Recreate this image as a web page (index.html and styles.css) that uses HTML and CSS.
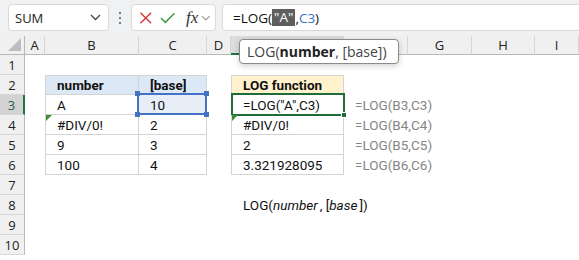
FILE: index.html
```html
<!DOCTYPE html>
<html lang="en">
<head>
    <meta charset="UTF-8">
    <title>LOG function</title>
    <link rel="stylesheet" href="styles.css">
</head>
<body>
    <div class="app">
        <div class="toolbar">
            <div class="namebox">
                <span>SUM</span>
                <svg class="chev" width="11" height="7" viewBox="0 0 11 7"><path d="M1 1l4.5 4.5L10 1" fill="none" stroke="#444" stroke-width="1.3"/></svg>
            </div>
            <div class="dots"><i></i><i></i><i></i></div>
            <div class="fxbox">
                <svg width="14" height="14" viewBox="0 0 14 14"><path d="M1.5 1.5l11 11M12.5 1.5l-11 11" stroke="#d63b3b" stroke-width="1.5" fill="none"/></svg>
                <svg width="16" height="12" viewBox="0 0 16 12"><path d="M1 6l4.5 4.5L15 1" stroke="#3f9a4a" stroke-width="1.5" fill="none"/></svg>
                <span class="fx">fx</span>
                <svg width="10" height="6" viewBox="0 0 10 6"><path d="M1 1l4 4 4-4" fill="none" stroke="#999" stroke-width="1.2"/></svg>
            </div>
            <div class="formula">=LOG(<span class="hl">"A"</span>,<span class="ref">C3</span>)</div>
        </div>

        <div class="sheet">
            <!-- E and F headers sit under the tooltip -->
            <div class="row colhead">
                <div class="corner"><svg width="13" height="13" viewBox="0 0 13 13"><path d="M13 0v13H0z" fill="#bdbdbd"/></svg></div>
                <div>A</div><div>B</div><div>C</div><div>D</div>
                <div class="sel"></div><div></div><div>G</div><div>H</div><div>I</div>
            </div>
            <div class="row">
                <div class="rh">1</div>
                <div></div><div></div><div></div><div></div><div></div><div></div><div></div><div></div><div></div>
            </div>
            <div class="row">
                <div class="rh">2</div>
                <div></div>
                <div class="t l top th blue">number</div>
                <div class="t top th blue">[base]</div>
                <div></div>
                <div class="t l top th yel">LOG function</div>
                <div></div><div></div><div></div><div></div>
            </div>
            <div class="row">
                <div class="rh cur">3</div>
                <div></div>
                <div class="t l">A</div>
                <div class="t refcell">10<i class="h tl"></i><i class="h tr"></i><i class="h bl"></i><i class="h br"></i></div>
                <div></div>
                <div class="t l active">=LOG("A",C3)<i class="fill"></i></div>
                <div class="note">=LOG(B3,C3)</div>
                <div></div><div></div><div></div>
            </div>
            <div class="row">
                <div class="rh">4</div>
                <div></div>
                <div class="t l err">#DIV/0!</div>
                <div class="t">2</div>
                <div></div>
                <div class="t l err">#DIV/0!</div>
                <div class="note">=LOG(B4,C4)</div>
                <div></div><div></div><div></div>
            </div>
            <div class="row">
                <div class="rh">5</div>
                <div></div>
                <div class="t l">9</div>
                <div class="t">3</div>
                <div></div>
                <div class="t l">2</div>
                <div class="note">=LOG(B5,C5)</div>
                <div></div><div></div><div></div>
            </div>
            <div class="row">
                <div class="rh">6</div>
                <div></div>
                <div class="t l">100</div>
                <div class="t">4</div>
                <div></div>
                <div class="t l">3.321928095</div>
                <div class="note">=LOG(B6,C6)</div>
                <div></div><div></div><div></div>
            </div>
            <div class="row">
                <div class="rh">7</div>
                <div></div><div></div><div></div><div></div><div></div><div></div><div></div><div></div><div></div>
            </div>
            <div class="row">
                <div class="rh">8</div>
                <div></div><div></div><div></div><div></div>
                <div class="syntax">LOG(<i>number</i>, [<i>base</i>])</div>
                <div></div><div></div><div></div><div></div>
            </div>
            <div class="row">
                <div class="rh">9</div>
                <div></div><div></div><div></div><div></div><div></div><div></div><div></div><div></div><div></div>
            </div>
            <div class="row">
                <div class="rh">10</div>
                <div></div><div></div><div></div><div></div><div></div><div></div><div></div><div></div><div></div>
            </div>
        </div>

        <div class="tip">LOG(<b>number</b>, [base])</div>
    </div>
</body>
</html>
```

FILE: styles.css
```css
* {
    margin: 0;
    padding: 0;
    box-sizing: border-box;
}

body {
    background: #fff;
    overflow: hidden;
    font-family: "Open Sans", "Noto Sans", sans-serif;
    color: #222;
}

.app {
    position: relative;
    width: 579px;
    height: 260px;
}

/* formula bar */
.toolbar {
    height: 36px;
    background: #eff1f2;
    display: flex;
    align-items: center;
    padding: 0 0 1px 8px;
}

.namebox {
    width: 101px;
    height: 27px;
    background: #fff;
    border: 1px solid #d9d9d9;
    border-radius: 4px;
    display: flex;
    align-items: center;
    justify-content: space-between;
    padding: 0 7px 0 6px;
    font-size: 13px;
}

.dots {
    width: 22px;
    display: flex;
    flex-direction: column;
    align-items: center;
    gap: 3px;
}

.dots i {
    width: 2px;
    height: 2px;
    background: #555;
    border-radius: 1px;
}

.fxbox {
    width: 85px;
    height: 27px;
    background: #fff;
    border: 1px solid #d9d9d9;
    border-radius: 4px;
    display: flex;
    align-items: center;
    padding: 0 4px 0 7px;
    gap: 7px;
}

.fx {
    font-family: "Liberation Serif", serif;
    font-style: italic;
    font-size: 17px;
    color: #333;
    margin-left: 4px;
    margin-right: -4px;
    line-height: 1;
}

.formula {
    flex: 1;
    height: 27px;
    margin-left: 6px;
    margin-right: -10px;
    background: #fff;
    border: 1px solid #d9d9d9;
    border-radius: 4px;
    display: flex;
    align-items: center;
    padding-left: 10px;
    font-size: 13.5px;
    color: #111;
    white-space: pre;
}

.formula .hl {
    background: #5e5e5e;
    color: #fff;
    padding: 0 2px;
    line-height: 17px;
}

.formula .ref {
    color: #3a72c9;
}

/* grid */
.sheet {
    font-family: Roboto, "Liberation Sans", sans-serif;
    font-size: 13.5px;
}

.row {
    display: grid;
    grid-template-columns: 25px 20px 94px 68px 24px 113px 64px 64px 63px 44px;
    height: 20px;
}

.row > div {
    display: flex;
    align-items: center;
    white-space: nowrap;
}

.colhead {
    height: 19px;
    background: #f0f0f0;
    font-family: "Open Sans", sans-serif;
    font-size: 13px;
    color: #222;
}

.colhead > div {
    justify-content: center;
    border-right: 1px solid #d6d6d6;
    border-bottom: 1px solid #b8b8b8;
}

.colhead .corner {
    justify-content: flex-end;
    align-items: flex-end;
    padding: 0 3px 3px 0;
    border-right-color: #b8b8b8;
}

.colhead .sel {
    background: #dcdcdc;
    border-bottom: 2px solid #217346;
}

.rh {
    background: #f0f0f0;
    justify-content: center;
    border-right: 1px solid #b8b8b8;
    border-bottom: 1px solid #d6d6d6;
    font-family: "Open Sans", sans-serif;
    font-size: 13px;
    color: #222;
}

.rh.cur {
    background: #d3d3d3;
    border-right: 2px solid #217346;
    color: #2c5e48;
}

/* table cells */
.t {
    position: relative;
    border-right: 1px solid #d4d4d4;
    border-bottom: 1px solid #d4d4d4;
    padding-left: 11px;
    color: #111;
}

.t.l {
    padding-left: 11px;
    border-left: 1px solid #d4d4d4;
}

.t.top {
    border-top: 1px solid #d4d4d4;
}

.th {
    font-weight: 700;
}

.blue {
    background: #dde8f6;
}

.yel {
    background: #fff2cc;
}

.note {
    padding-left: 11px;
    color: #858585;
}

.syntax {
    padding-left: 12px;
    color: #111;
}

.syntax i {
    font-style: italic;
    padding-right: 2px;
}

/* error marker */
.err::before {
    content: "";
    position: absolute;
    left: 0;
    top: 0;
    border-top: 6px solid #3c8f2f;
    border-right: 6px solid transparent;
}

/* range reference C3 */
.refcell {
    background: #e8eef8;
}

.refcell::after {
    content: "";
    position: absolute;
    left: -2px;
    top: -2px;
    right: -1px;
    bottom: -1px;
    border: 2px solid #4472c4;
}

.refcell .h {
    position: absolute;
    width: 5px;
    height: 5px;
    background: #4472c4;
    z-index: 2;
}

.h.tl { left: -4px; top: -4px; }
.h.tr { right: -3px; top: -4px; }
.h.bl { left: -4px; bottom: -3px; }
.h.br { right: -3px; bottom: -3px; }

/* active cell E3 */
.active::after {
    content: "";
    position: absolute;
    left: -1px;
    top: -2px;
    right: -2px;
    bottom: -2px;
    border: 2px solid #1f6b3a;
}

.active .fill {
    position: absolute;
    right: -4px;
    bottom: -4px;
    width: 6px;
    height: 6px;
    background: #1f6b3a;
    border: 1px solid #fff;
    z-index: 2;
}

/* argument tooltip */
.tip {
    position: absolute;
    left: 239px;
    top: 39px;
    width: 160px;
    height: 25px;
    background: #fff;
    border: 1px solid #8a8a8a;
    border-radius: 4px;
    box-shadow: 0 2px 6px rgba(0, 0, 0, 0.18);
    display: flex;
    align-items: center;
    padding-left: 7px;
    font-size: 14px;
    color: #444;
    white-space: pre;
}

.tip b {
    color: #222;
}
```
